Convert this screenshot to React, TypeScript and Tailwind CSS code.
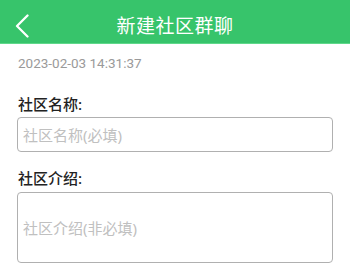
import React from 'react';

export default function App() {
    return (
        <div className="w-[350px] h-[279px] bg-white overflow-hidden font-['Noto_Sans','Noto_Sans_CJK_SC',sans-serif]">
            {/* Header */}
            <div className="h-[44px] pt-[9px] bg-[#37c46b] border-b border-[#5fd88a] grid grid-cols-[44px_1fr_44px] items-center">
                <div className="flex items-center pl-[15px]">
                    <svg width="14" height="24" viewBox="0 0 14 24" fill="none">
                        <polyline points="12.5,1.5 2,12 12.5,22.5" stroke="#fff" strokeWidth="2.3" strokeLinecap="round" strokeLinejoin="round" />
                    </svg>
                </div>
                <h1 className="text-center text-white text-[19px] leading-[24px] font-normal tracking-[0.5px]">新建社区群聊</h1>
                <div />
            </div>

            {/* Content */}
            <div className="px-[17px]">
                <p className="mt-[10px] text-[13.5px] leading-[18px] text-[#9a9a9a] pl-px font-['Roboto',sans-serif]">2023-02-03 14:31:37</p>

                <label className="block mt-[22px] text-[15px] leading-[20px] text-[#222] font-medium pl-px">社区名称:</label>
                <input
                    className="mt-[3px] block w-full h-[35px] rounded-[4px] border-[1.5px] border-[#b0b0b0] px-[5px] text-[15px] outline-none placeholder:text-[#c0c0c0]"
                    placeholder="社区名称(必填)"
                />

                <label className="block mt-[16px] text-[15px] leading-[20px] text-[#222] font-medium pl-px">社区介绍:</label>
                <input
                    className="mt-[4px] block w-full h-[71px] rounded-[4px] border-[1.5px] border-[#b0b0b0] px-[5px] text-[15px] outline-none placeholder:text-[#c0c0c0]"
                    placeholder="社区介绍(非必填)"
                />
            </div>
        </div>
    );
}
